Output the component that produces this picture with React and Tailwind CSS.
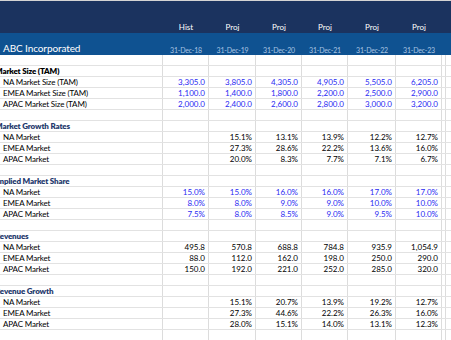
import React from 'react';

const COLS = ['w-[46px]', 'w-[47px]', 'w-[46px]', 'w-[46px]', 'w-[48px]', 'w-[46px]'];
const HEADS = ['Hist', 'Proj', 'Proj', 'Proj', 'Proj', 'Proj'];
const DATES = ['31-Dec-18', '31-Dec-19', '31-Dec-20', '31-Dec-21', '31-Dec-22', '31-Dec-23'];

const ROWS = [
  { type: 'blank' },
  { type: 'section', label: 'Market Size (TAM)', black: true },
  { label: 'NA Market Size (TAM)', input: true, values: ['3,305.0', '3,805.0', '4,305.0', '4,905.0', '5,505.0', '6,205.0'] },
  { label: 'EMEA Market Size (TAM)', input: true, values: ['1,100.0', '1,400.0', '1,800.0', '2,200.0', '2,500.0', '2,900.0'] },
  { label: 'APAC Market Size (TAM)', input: true, values: ['2,000.0', '2,400.0', '2,600.0', '2,800.0', '3,000.0', '3,200.0'] },
  { type: 'blank' },
  { type: 'section', label: 'Market Growth Rates' },
  { label: 'NA Market', values: ['', '15.1%', '13.1%', '13.9%', '12.2%', '12.7%'] },
  { label: 'EMEA Market', values: ['', '27.3%', '28.6%', '22.2%', '13.6%', '16.0%'] },
  { label: 'APAC Market', values: ['', '20.0%', '8.3%', '7.7%', '7.1%', '6.7%'] },
  { type: 'blank' },
  { type: 'section', label: 'Implied Market Share' },
  { label: 'NA Market', input: true, values: ['15.0%', '15.0%', '16.0%', '16.0%', '17.0%', '17.0%'] },
  { label: 'EMEA Market', input: true, values: ['8.0%', '8.0%', '9.0%', '9.0%', '10.0%', '10.0%'] },
  { label: 'APAC Market', input: true, values: ['7.5%', '8.0%', '8.5%', '9.0%', '9.5%', '10.0%'] },
  { type: 'blank' },
  { type: 'section', label: 'Revenues' },
  { label: 'NA Market', values: ['495.8', '570.8', '688.8', '784.8', '935.9', '1,054.9'] },
  { label: 'EMEA Market', values: ['88.0', '112.0', '162.0', '198.0', '250.0', '290.0'] },
  { label: 'APAC Market', values: ['150.0', '192.0', '221.0', '252.0', '285.0', '320.0'] },
  { type: 'blank' },
  { type: 'section', label: 'Revenue Growth' },
  { label: 'NA Market', values: ['', '15.1%', '20.7%', '13.9%', '19.2%', '12.7%'] },
  { label: 'EMEA Market', values: ['', '27.3%', '44.6%', '22.2%', '26.3%', '16.0%'] },
  { label: 'APAC Market', values: ['', '28.0%', '15.1%', '14.0%', '13.1%', '12.3%'] },
  { type: 'blank' },
];

const Row = ({ row }) => {
  const values = row.values || ['', '', '', '', '', ''];
  return (
    <div className="flex h-[11px] border-b border-[#e2e2e2] text-[8px] leading-[10px]">
      {/* label column, section titles spill in from the hidden column A */}
      <div className="w-[163px] shrink-0 border-r border-[#dcdcdc] whitespace-nowrap tracking-[-0.15px]">
        {row.type === 'section' ? (
          <span className={`ml-[-5px] font-extrabold ${row.black ? 'text-black' : 'text-[#1f3a6d]'}`}>{row.label}</span>
        ) : (
          <span className="ml-[3px] text-black">{row.label}</span>
        )}
      </div>
      {COLS.map((w, i) => (
        <div
          key={i}
          className={`${w} shrink-0 border-r border-[#dcdcdc] text-right pr-[3px] ${row.input ? 'text-[#2929f2]' : 'text-black'}`}
        >
          {values[i]}
        </div>
      ))}
      <div className="w-[4px] shrink-0 border-r border-[#dcdcdc]" />
      <div className="flex-1" />
    </div>
  );
};

export default function App() {
  return (
    <div className="w-[451px] h-[340px] overflow-hidden bg-white font-['Lato','Liberation_Sans',sans-serif]">
      <div className="h-[1px] bg-[#d4d4d4]" />
      {/* title bar */}
      <div className="h-[32px] bg-[#1b335f] flex items-end pb-[1px]">
        <div className="w-[163px] shrink-0" />
        {COLS.map((w, i) => (
          <div key={i} className={`${w} shrink-0 text-center text-white text-[8px] leading-[10px]`}>
            {HEADS[i]}
          </div>
        ))}
      </div>
      <div className="h-[22px] bg-[#0f5291] flex items-end">
        <div className="w-[163px] shrink-0 pl-[3px] text-white text-[10px] leading-[13px] tracking-[-0.1px] whitespace-nowrap">
          ABC Incorporated
        </div>
        {COLS.map((w, i) => (
          <div key={i} className={`${w} shrink-0 text-center text-[#a9c3e2] text-[7px] leading-[8px] pb-[1px] tracking-[-0.2px]`}>
            {DATES[i]}
          </div>
        ))}
      </div>
      {ROWS.map((row, i) => (
        <Row key={i} row={row} />
      ))}
    </div>
  );
}
